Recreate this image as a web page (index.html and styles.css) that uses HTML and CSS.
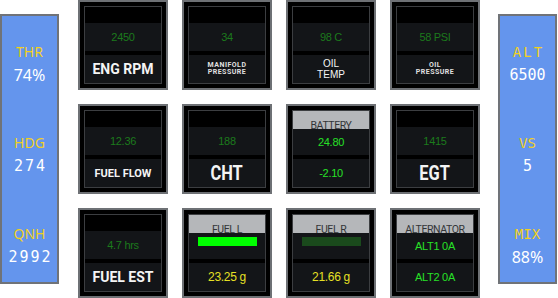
FILE: index.html
```html
<!DOCTYPE html>
<html>
<head>
<meta charset="utf-8">
<link rel="stylesheet" href="styles.css">
</head>
<body>
<div class="screen">
  <aside class="side side-left">
    <div class="readout"><div class="lbl">THR</div><div class="val">74%</div></div>
    <div class="readout"><div class="lbl">HDG</div><div class="val seg">274</div></div>
    <div class="readout"><div class="lbl">QNH</div><div class="val seg">2992</div></div>
  </aside>

  <main class="grid">
    <div class="card"><div class="inner">
      <div class="top"></div>
      <div class="mid"><span class="v dim">2450</span></div>
      <div class="bot"><span class="lab lab-lg">ENG RPM</span></div>
    </div></div>
    <div class="card"><div class="inner">
      <div class="top"></div>
      <div class="mid"><span class="v dim">34</span></div>
      <div class="bot"><span class="lab lab-xs">MANIFOLD<br>PRESSURE</span></div>
    </div></div>
    <div class="card"><div class="inner">
      <div class="top"></div>
      <div class="mid"><span class="v dim">98 C</span></div>
      <div class="bot"><span class="lab lab-reg">OIL<br>TEMP</span></div>
    </div></div>
    <div class="card"><div class="inner">
      <div class="top"></div>
      <div class="mid"><span class="v dim">58 PSI</span></div>
      <div class="bot"><span class="lab lab-xs">OIL<br>PRESSURE</span></div>
    </div></div>

    <div class="card"><div class="inner">
      <div class="top"></div>
      <div class="mid"><span class="v dim">12.36</span></div>
      <div class="bot"><span class="lab lab-md">FUEL FLOW</span></div>
    </div></div>
    <div class="card"><div class="inner">
      <div class="top"></div>
      <div class="mid"><span class="v dim">188</span></div>
      <div class="bot"><span class="lab lab-xl">CHT</span></div>
    </div></div>
    <div class="card"><div class="inner">
      <div class="hdr"><span>BATTERY</span></div>
      <div class="mid mid-h"><span class="v lit">24.80</span></div>
      <div class="bot"><span class="v lit">-2.10</span></div>
    </div></div>
    <div class="card"><div class="inner">
      <div class="top"></div>
      <div class="mid"><span class="v dim">1415</span></div>
      <div class="bot"><span class="lab lab-xl">EGT</span></div>
    </div></div>

    <div class="card"><div class="inner">
      <div class="top"></div>
      <div class="mid"><span class="v dim">4.7 hrs</span></div>
      <div class="bot"><span class="lab lab-lg">FUEL EST</span></div>
    </div></div>
    <div class="card"><div class="inner">
      <div class="hdr"><span>FUEL L</span></div>
      <div class="mid mid-h mid-bar"><div class="bar bar-on"></div></div>
      <div class="bot"><span class="v fuel">23.25 g</span></div>
    </div></div>
    <div class="card"><div class="inner">
      <div class="hdr"><span>FUEL R</span></div>
      <div class="mid mid-h mid-bar"><div class="bar bar-off"></div></div>
      <div class="bot"><span class="v fuel">21.66 g</span></div>
    </div></div>
    <div class="card"><div class="inner">
      <div class="hdr"><span>ALTERNATOR</span></div>
      <div class="mid mid-h"><span class="v lit">ALT1 0A</span></div>
      <div class="bot"><span class="v lit">ALT2 0A</span></div>
    </div></div>
  </main>

  <aside class="side side-right">
    <div class="readout"><div class="lbl mono wide">ALT</div><div class="val seg seg-r">6500</div></div>
    <div class="readout"><div class="lbl mono">VS</div><div class="val seg seg-r">5</div></div>
    <div class="readout"><div class="lbl mono">MIX</div><div class="val">88%</div></div>
  </aside>
</div>
</body>
</html>
```

FILE: styles.css
```css
html, body {
  margin: 0;
  padding: 0;
  background: #ffffff;
}

.screen {
  width: 558px;
  height: 298px;
  display: flex;
  align-items: center;
}

/* side panels */
.side {
  width: 59px;
  height: 270px;
  box-sizing: border-box;
  border: 2px solid #707378;
  background: #6495ed;
  display: flex;
  flex-direction: column;
  align-items: center;
  padding-top: 28px;
  gap: 51px;
  flex-shrink: 0;
}

.readout {
  display: flex;
  flex-direction: column;
  align-items: center;
  gap: 6px;
}

.lbl {
  font-family: "Noto Sans", sans-serif;
  font-size: 14px;
  line-height: 16px;
  color: #f2d01e;
}

.lbl.mono {
  font-family: "DejaVu Sans Mono", monospace;
  font-size: 14px;
}

.lbl.wide {
  letter-spacing: 2px;
  margin-right: -2px;
}

.val {
  font-family: "Noto Sans", sans-serif;
  font-size: 16px;
  line-height: 18px;
  color: #ffffff;
}

.val.seg {
  font-family: "DejaVu Sans Mono", monospace;
  font-size: 15px;
  letter-spacing: 2px;
  margin-right: -2px;
}

.val.seg-r {
  letter-spacing: 0;
  margin-right: 0;
}

/* card grid */
.grid {
  margin-left: 19px;
  margin-right: 18px;
  display: grid;
  grid-template-columns: repeat(4, 90px);
  grid-template-rows: repeat(3, 90px);
  gap: 14px;
  flex-shrink: 0;
}

.card {
  box-sizing: border-box;
  width: 90px;
  height: 90px;
  border: 2px solid #6e7175;
  background: #000000;
  padding: 4px;
}

.inner {
  box-sizing: border-box;
  height: 100%;
  border: 1px solid #3c3e41;
  background: #000000;
  display: flex;
  flex-direction: column;
}

.top {
  height: 16px;
}

.mid {
  height: 28px;
  background: #131518;
  display: flex;
  align-items: center;
  justify-content: center;
}

.mid-h {
  height: 26px;
}

.mid-bar {
  align-items: flex-start;
}

.bot {
  height: 28px;
  margin-top: 4px;
  background: #131518;
  display: flex;
  align-items: center;
  justify-content: center;
  text-align: center;
}

.hdr {
  height: 18px;
  background: #b5b7ba;
  overflow: hidden;
  text-align: center;
  font-family: Roboto, sans-serif;
  font-size: 10.5px;
  line-height: 10px;
  letter-spacing: -0.4px;
  color: #333538;
  padding-top: 10px;
  box-sizing: border-box;
}

.bar {
  width: 59px;
  height: 9px;
  margin-top: 4px;
  margin-left: 1px;
}

.bar-on { background: #00ff00; }
.bar-off { background: #1a4a1c; }

/* values */
.v {
  font-family: "Liberation Sans", Arial, sans-serif;
  font-size: 11px;
  line-height: 12px;
  letter-spacing: -0.3px;
}

.dim { color: #1c7a1c; }
.lit { color: #27e027; }
.fuel { color: #e6e024; font-size: 12px; }

/* labels */
.lab {
  font-family: Roboto, sans-serif;
  color: #f4f4f4;
  font-weight: 700;
}

.lab-lg {
  font-size: 14px;
  line-height: 16px;
}

.lab-md {
  font-size: 11px;
  line-height: 13px;
}

.lab-xl {
  font-size: 20px;
  line-height: 22px;
  display: inline-block;
  transform: scaleX(0.82);
}

.lab-xs {
  font-size: 7px;
  line-height: 7.5px;
  letter-spacing: 0.5px;
  color: #e0e0e0;
}

.lab-reg {
  font-family: "Liberation Sans", Arial, sans-serif;
  font-weight: 400;
  font-size: 10px;
  line-height: 11px;
}
```
